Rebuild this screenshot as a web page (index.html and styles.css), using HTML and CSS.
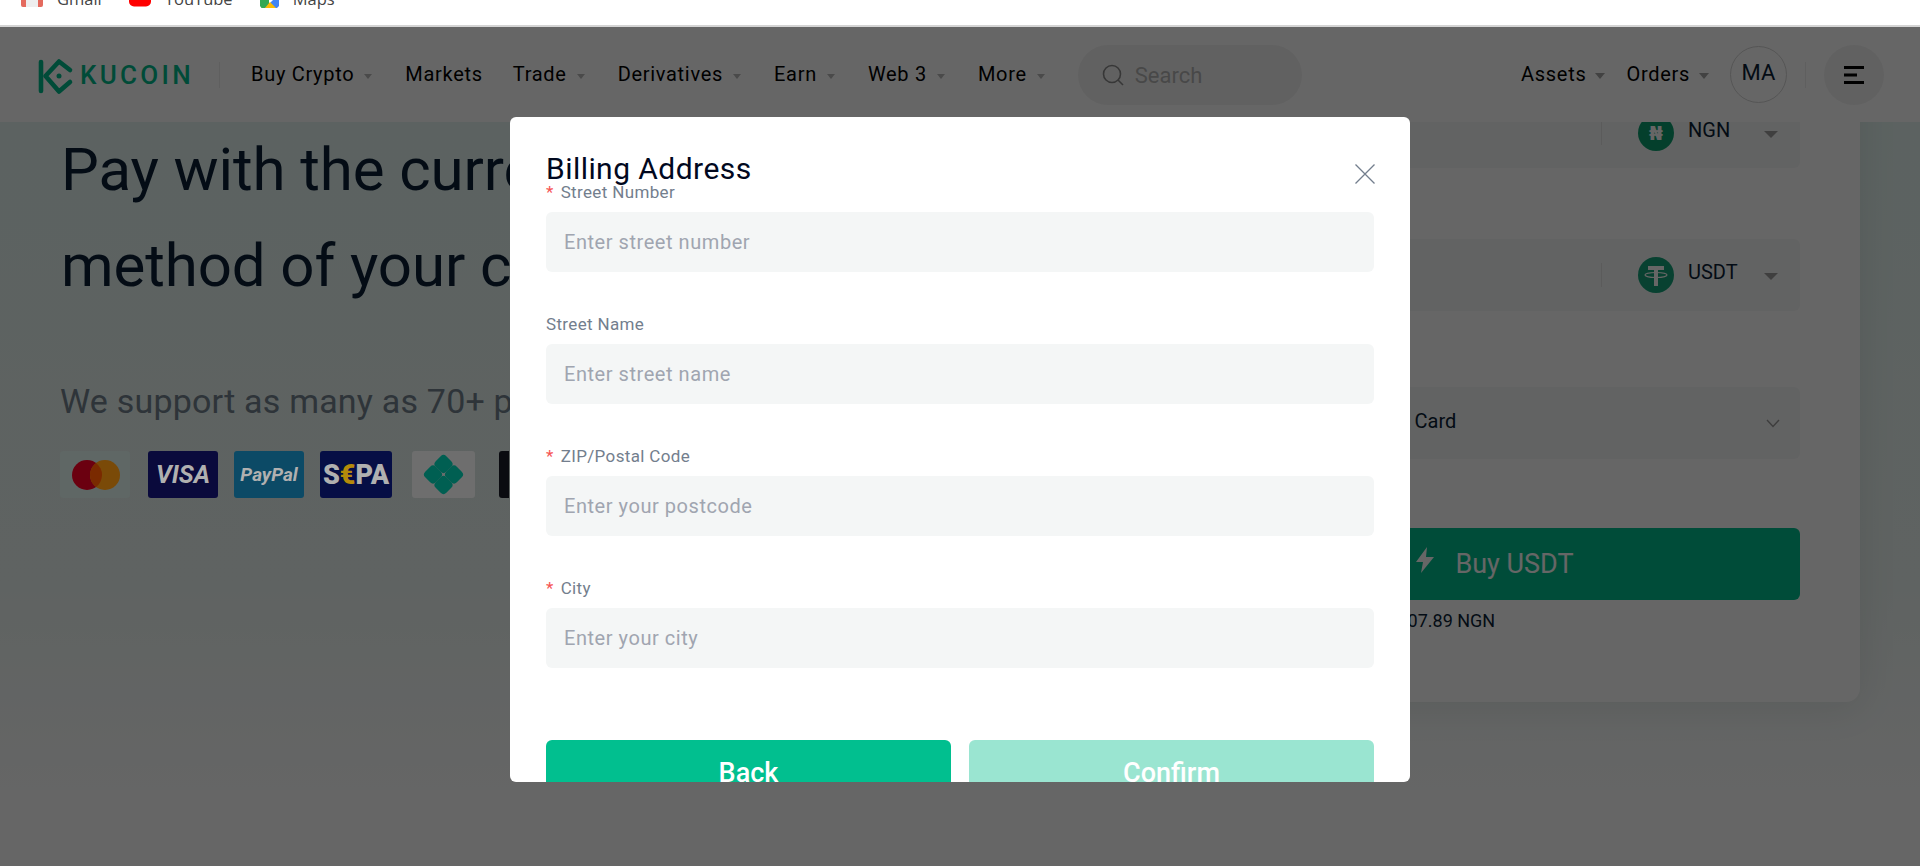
FILE: index.html
```html
<!DOCTYPE html>
<html lang="en">

<head>
    <meta charset="UTF-8">
    <meta name="viewport" content="width=device-width, initial-scale=1.0">
    <title>Buy Crypto</title>
    <link rel="stylesheet" href="styles.css">
</head>

<body>

    <div class="bookmarks">
        <a class="bookmark">
            <svg class="bm-icon" viewBox="0 0 22 22"><rect y="2" width="22" height="20" rx="2" fill="#eee"/><path d="M0 4v16a2 2 0 0 0 2 2h3V4zM17 4v18h3a2 2 0 0 0 2-2V4z" fill="#e46a5e"/></svg>
            <span class="bm-label">Gmail</span>
        </a>
        <a class="bookmark">
            <svg class="bm-icon" viewBox="0 0 22 22"><rect width="22" height="21.5" rx="5" fill="#f00"/></svg>
            <span class="bm-label">YouTube</span>
        </a>
        <a class="bookmark">
            <svg class="bm-icon bm-icon-maps" viewBox="0 0 19 22"><path d="M0 12l9-10v20H1.500L0 20z" fill="#34a853"/><path d="M5 22L19 8v12l-2 2z" fill="#4285f4"/><path d="M5 22l5-6 6 6z" fill="#fbbc04"/></svg>
            <span class="bm-label">Maps</span>
        </a>
    </div>

    <div class="page">
        <header class="topbar">
            <svg class="logo-mark" viewBox="0 0 50 50">
                <path d="M11 12V41" stroke="#01bc8d" stroke-width="4.600" stroke-linecap="round" fill="none"/>
                <path d="M40 20L29 11.500 15.500 26 29 41.500 40 32" stroke="#01bc8d" stroke-width="4.600" stroke-linecap="round" stroke-linejoin="round" fill="none"/>
                <circle cx="29" cy="26" r="2.500" fill="#01bc8d"/>
            </svg>
            <span class="logo-text">KUCOIN</span>
            <span class="topbar-sep"></span>
            <nav class="nav">
                <a class="nav-item">Buy Crypto<i class="caret"></i></a>
                <a class="nav-item nav-plain">Markets</a>
                <a class="nav-item">Trade<i class="caret"></i></a>
                <a class="nav-item">Derivatives<i class="caret"></i></a>
                <a class="nav-item">Earn<i class="caret"></i></a>
                <a class="nav-item">Web 3<i class="caret"></i></a>
                <a class="nav-item">More<i class="caret"></i></a>
            </nav>
            <div class="search">
                <svg class="search-icon" viewBox="0 0 22 22"><circle cx="10" cy="10" r="8.500" stroke="#8a8a8a" stroke-width="1.600" fill="none"/><path d="M16 16l5 5" stroke="#8a8a8a" stroke-width="1.600"/></svg>
                <span>Search</span>
            </div>
            <div class="user-menu">
                <a class="nav-item">Assets<i class="caret caret-big"></i></a>
                <a class="nav-item">Orders<i class="caret caret-big"></i></a>
                <span class="avatar">MA</span>
                <span class="topbar-sep topbar-sep-user"></span>
                <span class="menu-btn">
                    <svg viewBox="0 0 20 18" width="20" height="18"><path d="M0 1.500h20M0 9h13M0 16.500h20" stroke="#000" stroke-width="3"/></svg>
                </span>
            </div>
        </header>

        <section class="hero">
            <div class="hero-text">
                <h1>Pay with the currency and payment<br>method of your choice</h1>
                <p class="hero-sub">We support as many as 70+ payment methods</p>
                <div class="payments">
                    <span class="pay pay-mc">
                        <svg viewBox="0 0 70 47" width="70" height="47"><circle cx="27" cy="24" r="15" fill="#6b0010"/><circle cx="45" cy="24" r="15" fill="#7a4a08"/><path d="M36 12a15 15 0 0 1 0 24 15 15 0 0 1 0-24z" fill="#7a2a00"/></svg>
                    </span>
                    <span class="pay pay-visa">VISA</span>
                    <span class="pay pay-paypal">PayPal</span>
                    <span class="pay pay-sepa">S<em>€</em>PA</span>
                    <span class="pay pay-pix">
                        <svg viewBox="0 0 63 47" width="63" height="47"><g fill="#005f52"><rect x="24" y="5.500" width="15" height="15" rx="4" transform="rotate(45 31.500 13)"/><rect x="24" y="26.500" width="15" height="15" rx="4" transform="rotate(45 31.500 34)"/><rect x="13.500" y="16" width="15" height="15" rx="4" transform="rotate(45 21 23.500)"/><rect x="34.500" y="16" width="15" height="15" rx="4" transform="rotate(45 42 23.500)"/></g></svg>
                    </span>
                    <span class="pay pay-black"></span>
                </div>
            </div>

            <div class="trade-card">
                <div class="amount-row amount-row-first">
                    <span class="row-sep"></span>
                    <span class="coin coin-ngn">₦</span>
                    <span class="coin-name">NGN</span>
                    <i class="caret caret-coin"></i>
                </div>
                <div class="amount-row amount-row-second">
                    <span class="row-sep"></span>
                    <span class="coin">
                        <svg viewBox="0 0 36 36" width="36" height="36"><path d="M10 9h16v4h-6v16h-4V13h-6z" fill="#fff"/><ellipse cx="18" cy="18" rx="11" ry="2.500" stroke="#fff" stroke-width="1.200" fill="none"/></svg>
                    </span>
                    <span class="coin-name">USDT</span>
                    <i class="caret caret-coin"></i>
                </div>
                <div class="method-row">
                    <span>Credit/Debit Card</span>
                    <svg viewBox="0 0 14 9" width="14" height="9"><path d="M1 1l6 6.500L13 1" stroke="#999" stroke-width="1.400" fill="none"/></svg>
                </div>
                <button class="buy-btn">
                    <svg viewBox="0 0 18 26" width="18" height="26"><path d="M11 0L0 15h7l-2 11 13-16h-8z" fill="#fff"/></svg>
                    <span>Buy USDT</span>
                </button>
                <p class="price-note">Estimated price: 1 USDT ≈ 1,207.89 NGN</p>
            </div>
        </section>

        <div class="overlay">
            <div class="modal">
                <h2>Billing Address</h2>
                <svg class="modal-close" viewBox="0 0 20 20" width="20" height="20"><path d="M.5.500l19 19M19.500.500l-19 19" stroke="#737e8d" stroke-width="1.300"/></svg>
                <form>
                    <div class="field">
                        <label class="required">Street Number</label>
                        <input type="text" placeholder="Enter street number">
                    </div>
                    <div class="field">
                        <label>Street Name</label>
                        <input type="text" placeholder="Enter street name">
                    </div>
                    <div class="field">
                        <label class="required">ZIP/Postal Code</label>
                        <input type="text" placeholder="Enter your postcode">
                    </div>
                    <div class="field">
                        <label class="required">City</label>
                        <input type="text" placeholder="Enter your city">
                    </div>
                    <div class="modal-actions">
                        <button type="button" class="btn-back">Back</button>
                        <button type="button" class="btn-confirm">Confirm</button>
                    </div>
                </form>
            </div>
        </div>
    </div>

</body>

</html>
```

FILE: styles.css
```css
* {
    box-sizing: border-box;
}

html,
body {
    margin: 0;
    height: 866px;
    overflow: hidden;
}

body {
    font-family: Roboto, "Liberation Sans", sans-serif;
    color: #0a1e36;
    background: #fff;
}

/* browser bookmarks strip, cut off at the top */
.bookmarks {
    height: 27px;
    background: #fff;
    border-bottom: 2px solid #d4d4d4;
    overflow: hidden;
    display: flex;
    padding-left: 21px;
}

.bookmark {
    display: flex;
    align-items: flex-start;
    margin-top: -15px;
    margin-right: 27px;
    height: 22px;
}

.bm-icon {
    width: 22px;
    height: 22px;
    margin-right: 14px;
}

.bm-icon-maps {
    width: 19px;
    margin-top: 1px;
}

.bm-label {
    font-family: "Open Sans", sans-serif;
    font-size: 16.500px;
    line-height: 22px;
    padding-top: 3px;
    color: #444;
}

.page {
    position: relative;
    height: 839px;
    overflow: hidden;
}

/* top navigation */
.topbar {
    position: relative;
    z-index: 1;
    height: 95px;
    background: #fff;
    display: flex;
    align-items: center;
    padding: 0 36px 0 30px;
}

.logo-mark {
    width: 50px;
    height: 50px;
}

.logo-text {
    font-size: 26px;
    font-weight: 500;
    letter-spacing: 3.300px;
    color: #01bc8d;
    width: 139px;
}

.topbar-sep {
    width: 1px;
    height: 26px;
    background: #eee;
    margin-right: 31px;
}

.nav {
    display: flex;
    align-items: center;
    gap: 33px;
}

.nav-item {
    display: flex;
    align-items: center;
    padding-bottom: 1px;
    font-size: 20px;
    letter-spacing: .7px;
    color: #000;
    white-space: nowrap;
}

.nav-plain {
    margin-right: -3px;
}

.caret {
    display: block;
    width: 0;
    height: 0;
    margin-left: 10px;
    margin-top: 4px;
    border-style: solid;
    border-width: 5px 4px 0;
    border-color: #b9b9b9 transparent transparent;
}

.caret-big {
    border-width: 6px 5px 0;
    border-color: #a5a5a5 transparent transparent;
    margin-left: 9px;
}

.search {
    display: flex;
    align-items: center;
    width: 224px;
    height: 60px;
    margin-left: 33px;
    padding-left: 24px;
    border-radius: 30px;
    background: #f3f3f3;
    color: #b5b5b5;
    font-size: 22px;
}

.search span {
    padding-top: 2px;
}

.search-icon {
    width: 22px;
    height: 22px;
    margin-right: 11px;
}

.user-menu {
    display: flex;
    align-items: center;
    margin-left: auto;
    gap: 21px;
}

.avatar {
    width: 57px;
    height: 57px;
    border: 1px solid #d5d5d5;
    border-radius: 50%;
    display: flex;
    align-items: center;
    justify-content: center;
    padding-bottom: 5px;
    font-size: 22px;
}

.topbar-sep-user {
    margin: 0 -3px;
}

.menu-btn {
    width: 60px;
    height: 60px;
    border-radius: 50%;
    background: #f3f3f3;
    display: flex;
    align-items: center;
    justify-content: center;
}

/* page body under the dark overlay */
.hero {
    height: 668px;
    display: flex;
    justify-content: space-between;
    padding: 0 60px 0 61px;
    background: linear-gradient(180deg, #e5f6f2 0%, #eef7f4 70%, #fdfefe 100%);
}

.hero-text {
    width: 1000px;
}

.hero h1 {
    margin: 0;
    font-size: 60px;
    font-weight: 400;
    line-height: 96px;
    letter-spacing: -.1px;
    white-space: nowrap;
}

.hero-sub {
    margin: 63px 0 0 -1px;
    font-size: 34px;
    line-height: 48px;
    letter-spacing: .2px;
    color: #74828e;
    white-space: nowrap;
}

/* these logos stay bright in the reference, so they sit above the overlay */
.payments {
    position: relative;
    z-index: 3;
    display: flex;
    margin: 26px 0 0 -1px;
    width: 449px;
    overflow: hidden;
}

.pay {
    flex: none;
    height: 47px;
    width: 70px;
    margin-right: 18px;
    border-radius: 3px;
    display: flex;
    align-items: center;
    justify-content: center;
    font-weight: 700;
    font-style: italic;
    color: #b0b0b0;
}

.pay-mc {
    background: #5f6765;
}

.pay-visa {
    background: #0a0a3c;
    font-size: 25px;
}

.pay-paypal {
    width: 70px;
    margin-left: -2px;
    background: #0c4a66;
    font-size: 19px;
}

.pay-sepa {
    width: 72px;
    margin-left: -2px;
    margin-right: 20px;
    background: #060e45;
    font-size: 27px;
    font-style: normal;
    font-weight: 900;
}

.pay-sepa em {
    color: #b58a0a;
    font-style: normal;
}

.pay-pix {
    width: 63px;
    margin-right: 24px;
    background: #6e6e6e;
}

.pay-black {
    background: #0a0b10;
}

.trade-card {
    flex: none;
    width: 730px;
    height: 680px;
    margin-top: -100px;
    padding: 76px 60px 0;
    background: #fff;
    border-radius: 14px;
    box-shadow: 0 6px 40px rgba(0, 20, 20, .09);
}

.amount-row {
    display: flex;
    align-items: center;
    justify-content: flex-end;
    height: 72px;
    padding-right: 22px;
    border-radius: 6px;
    background: #f6f7f7;
}

.amount-row-first {
    height: 70px;
}

.amount-row-second {
    margin-top: 71px;
}

.row-sep {
    width: 1px;
    height: 24px;
    margin-right: 36px;
    background: #e4e4e4;
}

.coin {
    width: 36px;
    height: 36px;
    border-radius: 50%;
    background: #14a37a;
    color: #fff;
    font-size: 20px;
    font-weight: 700;
    display: flex;
    align-items: center;
    justify-content: center;
    font-family: "DejaVu Sans", sans-serif;
}

.coin-ngn {
    background: #0b9f6e;
}

.coin-name {
    width: 76px;
    margin-left: 14px;
    padding-bottom: 6px;
    font-size: 20px;
}

.caret-coin {
    margin: 2px 0 0;
    border-width: 7px 7px 0;
    border-color: #9d9d9d transparent transparent;
}

.method-row {
    display: flex;
    align-items: center;
    justify-content: space-between;
    height: 72px;
    margin-top: 76px;
    padding: 0 20px 0 112px;
    border-radius: 6px;
    background: #f6f7f7;
    font-size: 20px;
}

.method-row span {
    padding-bottom: 4px;
}

.buy-btn {
    display: flex;
    align-items: center;
    justify-content: center;
    gap: 21px;
    width: 100%;
    height: 72px;
    margin-top: 69px;
    padding: 0;
    border: none;
    border-radius: 6px;
    background: #01bf8f;
    color: #fff;
    font-family: inherit;
    font-size: 27px;
}

.buy-btn svg {
    margin-bottom: 8px;
}

.price-note {
    margin: 10px 0 0 -18px;
    font-size: 18px;
    line-height: 22px;
    white-space: nowrap;
}

/* modal */
.overlay {
    position: absolute;
    z-index: 2;
    top: 0;
    left: 0;
    right: 0;
    bottom: 0;
    background: rgba(0, 0, 0, .6);
    display: flex;
    justify-content: center;
    padding-top: 90px;
}

.modal {
    position: relative;
    width: 900px;
    height: 665px;
    padding: 38px 36px 0;
    border-radius: 6px;
    background: #fff;
    overflow: hidden;
}

.modal h2 {
    margin: 0 0 -2px;
    font-size: 30px;
    font-weight: 400;
    line-height: 27px;
    letter-spacing: .45px;
    color: #01081e;
}

.modal-close {
    position: absolute;
    top: 47px;
    right: 35px;
}

.field {
    margin-bottom: 40px;
}

.field label {
    display: block;
    height: 24px;
    margin-bottom: 8px;
    font-size: 17px;
    line-height: 24px;
    letter-spacing: .35px;
    color: #737e8d;
}

.required::before {
    content: "*";
    margin-right: 7px;
    color: #f65454;
}

.field input {
    display: block;
    width: 100%;
    height: 60px;
    padding: 0 18px;
    border: none;
    border-radius: 6px;
    background: #f4f6f6;
    font-family: inherit;
    font-size: 20px;
    letter-spacing: .55px;
    color: #01081e;
}

.field input::placeholder {
    color: #a0a5b0;
    opacity: 1;
}

.modal-actions {
    display: flex;
    gap: 18px;
    margin-top: 72px;
}

.modal-actions button {
    flex: 1;
    height: 66px;
    border: none;
    border-radius: 6px;
    color: #fff;
    font-family: inherit;
    font-size: 27px;
    font-weight: 500;
}

.btn-back {
    background: #01bf8f;
}

.btn-confirm {
    background: #9ae5d1;
}
```
